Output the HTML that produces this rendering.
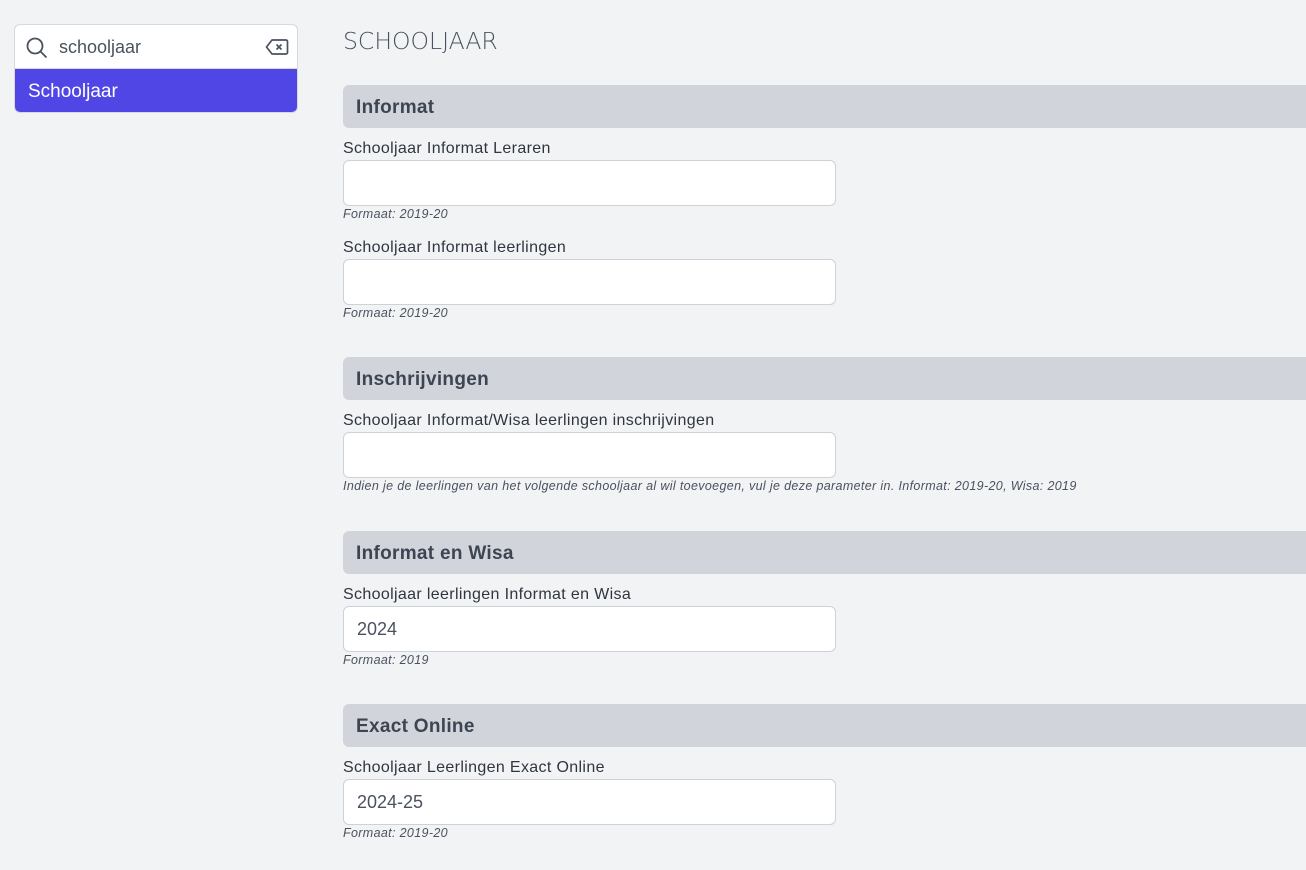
<!DOCTYPE html>
<html><head><meta charset="utf-8"><style>
*{box-sizing:border-box;margin:0;padding:0}
body{width:1306px;height:870px;background:#f2f3f5;font-family:"Liberation Sans",sans-serif;color:#2f3640;position:relative;overflow:hidden}
.side{position:absolute;left:14px;top:24px;width:284px;height:89px;background:#fff;border:1px solid #d6d9de;border-radius:6px;overflow:hidden}
.srch{height:44px;border-bottom:1px solid #d6d9de;position:relative}
.srch span{position:absolute;left:44px;top:12px;font-size:18px;color:#4a5260}
.item{height:44px;background:#5046e5;color:#fff;font-size:19px;padding:12px 13px}
h1{position:absolute;left:343px;top:27px;font-family:"DejaVu Sans",sans-serif;font-weight:200;font-size:23.5px;color:#4a5260}
.hd{position:absolute;left:343px;width:963px;height:43px;background:#d1d4db;border-radius:6px 0 0 6px;font-weight:bold;font-size:19px;letter-spacing:0.3px;color:#3d4552;padding:12px 13px}
.lb{position:absolute;left:343px;font-size:16px;letter-spacing:0.35px;color:#2f3640;margin-top:1px}
.in{position:absolute;left:343px;width:493px;height:46px;background:#fff;border:1px solid #cdd1d8;border-radius:6px;font-size:18px;color:#4a5260;padding:12px 13px}
.hp{position:absolute;left:343px;font-size:12.5px;letter-spacing:0.35px;font-style:italic;color:#4a5260}
</style></head><body>
<div class="side">
<div class="srch">
<svg style="position:absolute;left:10px;top:11px" width="24" height="24" viewBox="0 0 24 24" fill="none" stroke="#4a5260" stroke-width="1.8"><circle cx="10" cy="10" r="7.5"/><path d="M15.5 15.5L21.5 21.5"/></svg>
<span>schooljaar</span>
<svg style="position:absolute;left:250px;top:12px" width="24" height="20" viewBox="0 0 24 20" fill="none" stroke="#4a5260" stroke-width="1.7"><path d="M7 3H21a1.5 1.5 0 0 1 1.5 1.5v11a1.5 1.5 0 0 1-1.5 1.5H7L1.5 10Z" stroke-linejoin="round"/><path d="M11.5 7.5l5 5M16.5 7.5l-5 5"/></svg>
</div>
<div class="item">Schooljaar</div>
</div>
<h1>SCHOOLJAAR</h1>

<div class="hd" style="top:85px">Informat</div>
<div class="lb" style="top:139px">Schooljaar Informat Leraren</div>
<div class="in" style="top:160px"></div>
<div class="hp" style="top:207px">Formaat: 2019-20</div>
<div class="lb" style="top:238px">Schooljaar Informat leerlingen</div>
<div class="in" style="top:259px"></div>
<div class="hp" style="top:306px">Formaat: 2019-20</div>

<div class="hd" style="top:357px">Inschrijvingen</div>
<div class="lb" style="top:411px">Schooljaar Informat/Wisa leerlingen inschrijvingen</div>
<div class="in" style="top:432px"></div>
<div class="hp" style="top:479px">Indien je de leerlingen van het volgende schooljaar al wil toevoegen, vul je deze parameter in. Informat: 2019-20, Wisa: 2019</div>

<div class="hd" style="top:531px">Informat en Wisa</div>
<div class="lb" style="top:585px">Schooljaar leerlingen Informat en Wisa</div>
<div class="in" style="top:606px">2024</div>
<div class="hp" style="top:653px">Formaat: 2019</div>

<div class="hd" style="top:704px">Exact Online</div>
<div class="lb" style="top:758px">Schooljaar Leerlingen Exact Online</div>
<div class="in" style="top:779px">2024-25</div>
<div class="hp" style="top:826px">Formaat: 2019-20</div>
</body></html>
